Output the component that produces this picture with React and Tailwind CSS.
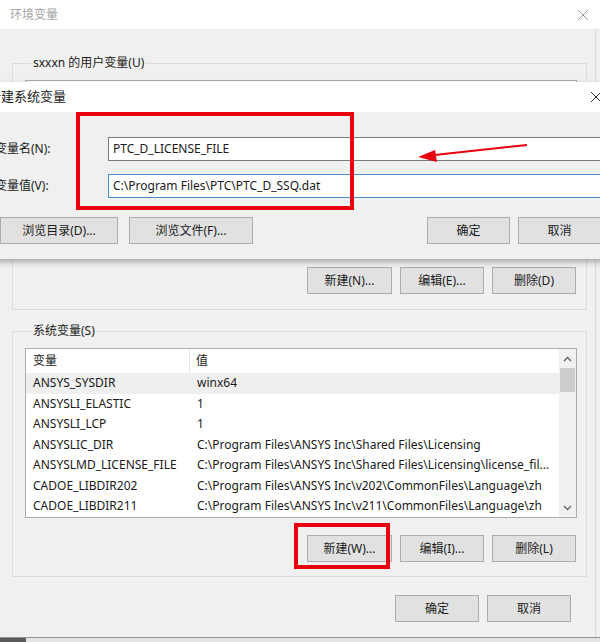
import React from 'react';

const rows = [
    ['ANSYS_SYSDIR', 'winx64'],
    ['ANSYSLI_ELASTIC', '1'],
    ['ANSYSLI_LCP', '1'],
    ['ANSYSLIC_DIR', 'C:\\Program Files\\ANSYS Inc\\Shared Files\\Licensing'],
    ['ANSYSLMD_LICENSE_FILE', 'C:\\Program Files\\ANSYS Inc\\Shared Files\\Licensing\\license_fil...'],
    ['CADOE_LIBDIR202', 'C:\\Program Files\\ANSYS Inc\\v202\\CommonFiles\\Language\\zh'],
    ['CADOE_LIBDIR211', 'C:\\Program Files\\ANSYS Inc\\v211\\CommonFiles\\Language\\zh'],
];

// Windows style push button
const Btn = ({ children, className = '' }) => (
    <button className={`h-[27px] bg-[#e1e1e1] border border-[#adadad] text-[12px] text-[#1a1a1a] ${className}`}>
        {children}
    </button>
);

const App = () => {
    return (
        <div className="relative w-[600px] h-[642px] overflow-hidden bg-[#f0f0f0] text-[12px] text-[#1a1a1a] font-['Noto_Sans','Noto_Sans_CJK_SC',sans-serif]">
            {/* background window: 环境变量 */}
            <div className="h-[30px] bg-white flex items-center justify-between pl-[10px] pr-[10px] border-b border-[#e6e6e6]">
                <span className="text-[#a5a5a5]">环境变量</span>
                <svg width="12" height="12" viewBox="0 0 12 12" className="mr-[1px]">
                    <path d="M1 1 L11 11 M11 1 L1 11" stroke="#9a9a9a" strokeWidth="1" />
                </svg>
            </div>

            <div className="pl-[12px] pr-[13px] pt-[25px]">
                {/* user variables */}
                <fieldset className="border border-[#dcdcdc] pl-[12px] pr-[9px] pt-[9px] pb-[15px]">
                    <legend className="ml-[6px] px-[2px] leading-[16px]">sxxxn 的用户变量(U)</legend>
                    <div className="h-[178px] bg-white border border-[#adadad]" />
                    <div className="flex justify-end gap-[8px] mt-[9px] pr-[1px]">
                        <Btn className="w-[85px]">新建(N)...</Btn>
                        <Btn className="w-[84px]">编辑(E)...</Btn>
                        <Btn className="w-[84px]">删除(D)</Btn>
                    </div>
                </fieldset>

                {/* system variables */}
                <fieldset className="mt-[13px] border border-[#dcdcdc] pl-[12px] pr-[9px] pt-[9px] pb-[14px]">
                    <legend className="ml-[6px] px-[2px] leading-[16px]">系统变量(S)</legend>
                    <div className="h-[170px] bg-white border border-[#adadad] flex">
                        <div className="flex-1 min-w-0">
                            <div className="h-[24px] flex items-center">
                                <div className="w-[164px] pl-[7px] border-r border-[#e5e5e5] h-full flex items-center">变量</div>
                                <div className="pl-[6px]">值</div>
                            </div>
                            {rows.map(([name, value], i) => (
                                <div key={name} className={`h-[20.5px] flex items-center ${i === 0 ? 'bg-[#efefef]' : ''}`}>
                                    <div className="w-[164px] pl-[7px] whitespace-nowrap">{name}</div>
                                    <div className="pl-[7px] whitespace-nowrap overflow-hidden">{value}</div>
                                </div>
                            ))}
                        </div>
                        {/* scrollbar */}
                        <div className="w-[17px] bg-[#f0f0f0] flex flex-col items-center">
                            <svg width="9" height="17" viewBox="0 0 9 17" className="mt-[2px]">
                                <path d="M1 10 L4.5 6.5 L8 10" fill="none" stroke="#606060" strokeWidth="1.3" />
                            </svg>
                            <div className="w-[15px] h-[24px] bg-[#cdcdcd]" />
                            <div className="flex-1" />
                            <svg width="9" height="17" viewBox="0 0 9 17" className="mb-[1px]">
                                <path d="M1 7 L4.5 10.5 L8 7" fill="none" stroke="#606060" strokeWidth="1.3" />
                            </svg>
                        </div>
                    </div>
                    <div className="flex justify-end gap-[8px] mt-[17px] pr-[1px]">
                        <Btn className="w-[85px]">新建(W)...</Btn>
                        <Btn className="w-[84px]">编辑(I)...</Btn>
                        <Btn className="w-[84px]">删除(L)</Btn>
                    </div>
                </fieldset>

                <div className="flex justify-end gap-[8px] mt-[18px] pr-[16px]">
                    <Btn className="w-[84px] h-[26px]">确定</Btn>
                    <Btn className="w-[84px] h-[26px]">取消</Btn>
                </div>
            </div>

            {/* window right edge */}
            <div className="absolute top-[30px] bottom-0 left-[595px] w-[1px] bg-[#dadada]" />

            {/* bottom edge of the screen */}
            <div className="absolute left-0 right-0 bottom-0 h-[5px] bg-[#e4e4e4] border-t border-[#8f8f8f] flex">
                <div className="w-[26px] h-full bg-[#5a5a5a]" />
            </div>

            {/* overlaid dialog: 新建系统变量 */}
            <div className="absolute left-[-20px] top-[82px] w-[660px] bg-[#f0f0f0] shadow-[0_3px_6px_rgba(0,0,0,0.3)]">
                <div className="h-[30px] bg-white flex items-center justify-between pl-[8px] pr-[38px]">
                    <span className="text-[13px]">新建系统变量</span>
                    <svg width="12" height="12" viewBox="0 0 12 12">
                        <path d="M1 1 L11 11 M11 1 L1 11" stroke="#333" strokeWidth="1" />
                    </svg>
                </div>
                <div className="pl-[15px] pr-[39px] pt-[25px] pb-[15px]">
                    <div className="flex items-center h-[24px]">
                        <div className="w-[113px]">变量名(N):</div>
                        <div className="flex-1 h-full bg-white border border-[#7a7a7a] flex items-center pl-[4px]">PTC_D_LICENSE_FILE</div>
                    </div>
                    <div className="flex items-center h-[24px] mt-[13px]">
                        <div className="w-[113px]">变量值(V):</div>
                        <div className="flex-1 h-full bg-white border border-[#4a8fd0] flex items-center pl-[4px]">C:\Program Files\PTC\PTC_D_SSQ.dat</div>
                    </div>
                    <div className="flex mt-[19px]">
                        <Btn className="ml-[5px] w-[118px] h-[26px]">浏览目录(D)...</Btn>
                        <Btn className="ml-[11px] w-[124px] h-[26px]">浏览文件(F)...</Btn>
                        <Btn className="ml-auto w-[83px] h-[26px]">确定</Btn>
                        <Btn className="ml-[8px] w-[83px] h-[26px]">取消</Btn>
                    </div>
                </div>
            </div>

            {/* red annotations */}
            <div className="absolute left-[76px] top-[112px] w-[278px] h-[98px] border-[4px] border-[#e8000e]" />
            <div className="absolute left-[294px] top-[523px] w-[96px] h-[46px] border-[4px] border-[#e8000e]" />
            <svg className="absolute left-0 top-0" width="600" height="642" viewBox="0 0 600 642">
                <line x1="527" y1="145" x2="430" y2="155.5" stroke="#e8000e" strokeWidth="2" />
                <polygon points="418,157 435,150 437,162" fill="#e8000e" />
            </svg>
        </div>
    );
};

export default App;
